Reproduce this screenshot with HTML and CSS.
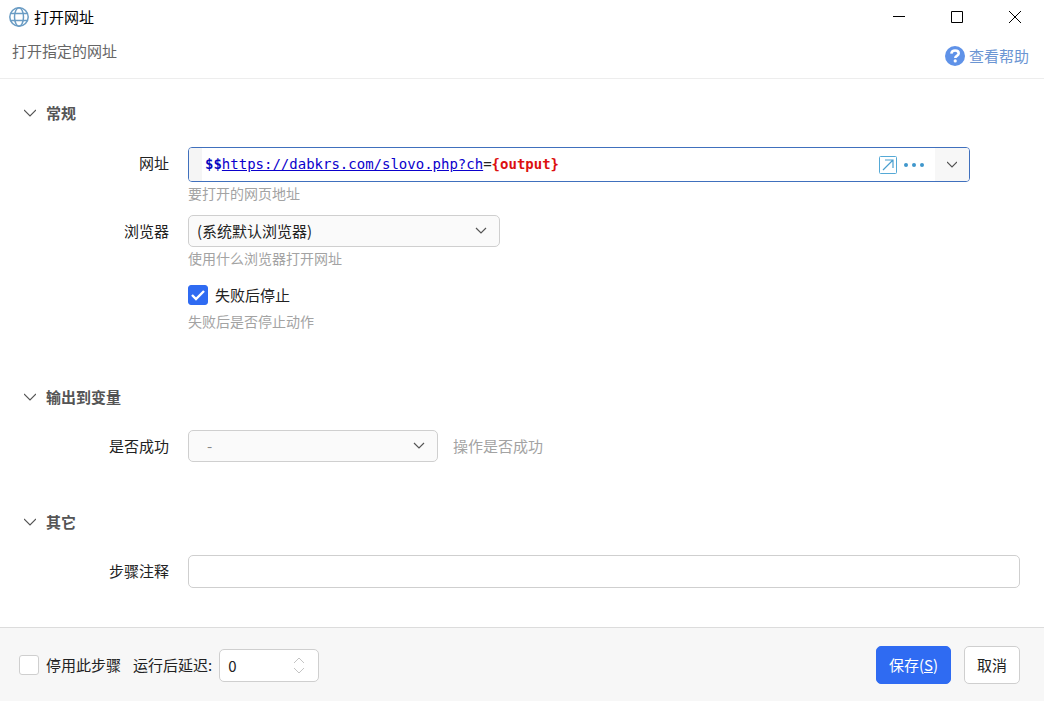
FILE: index.html
```html
<!DOCTYPE html>
<html lang="zh-CN">
<head>
<meta charset="utf-8">
<meta name="viewport" content="width=device-width, initial-scale=1">
<title>打开网址</title>
<link rel="stylesheet" href="styles.css">
</head>
<body>
<header class="titlebar">
  <svg class="globe" width="20" height="20" viewBox="0 0 20 20" aria-hidden="true"><circle cx="10" cy="10" r="9.200"/><ellipse cx="10" cy="10" rx="4.500" ry="9.200"/><path d="M2 6.500h16M2 13.500h16"/></svg>
  <h1 class="title">打开网址</h1>
  <div class="window-buttons">
    <button class="window-button" type="button" aria-label="最小化"><svg width="14" height="14" viewBox="0 0 14 14"><path d="M1 6.500h12"/></svg></button>
    <button class="window-button" type="button" aria-label="最大化"><svg width="14" height="14" viewBox="0 0 14 14"><path d="M1.500 1.500h11v11h-11z"/></svg></button>
    <button class="window-button" type="button" aria-label="关闭"><svg width="14" height="14" viewBox="0 0 14 14"><path d="M1 1l12 12M13 1L1 13"/></svg></button>
  </div>
</header>
<div class="intro">
  <p class="intro-text">打开指定的网址</p>
  <a class="help" href="#help"><svg width="20" height="20" viewBox="0 0 20 20" aria-hidden="true"><circle cx="10" cy="10" r="10" fill="#5f92e8"/><path d="M6.300 7.600C6.600 5.400 8.200 4.500 10.100 4.500c2.100 0 3.600 1.100 3.600 2.900 0 2.400-3.400 2.400-3.400 4.500" fill="none" stroke="#fff" stroke-width="2.600"/><circle cx="10.200" cy="14.900" r="1.600" fill="#fff"/></svg><span>查看帮助</span></a>
</div>
<main class="content">
  <section class="section section-general">
    <h2 class="section-title"><button class="toggle" type="button" aria-expanded="true"><svg class="chevron" width="12" height="8" viewBox="0 0 12 8"><path d="M0 1l6 6 6-6"/></svg>常规</button></h2>
    <div class="field">
      <span class="label" id="url-label">网址</span>
      <div class="control">
        <div class="url-box">
          <div class="url-text" contenteditable="true" role="textbox" aria-labelledby="url-label" spellcheck="false"><b class="prefix">$$</b><a href="#url">https://dabkrs.com/slovo.php?ch</a>=<b class="variable">{output}</b></div>
          <div class="url-actions">
            <button type="button" aria-label="展开编辑"><svg width="18" height="18" viewBox="0 0 18 18"><rect x=".500" y=".500" width="17" height="17" rx="1" fill="none" stroke="#55a9d6"/><path d="M4 14L14 4M6 4h8v8" fill="none" stroke="#4a9fcf" stroke-width="1.200"/></svg></button>
            <button type="button" aria-label="更多"><svg width="20" height="4" viewBox="0 0 20 4" fill="#3f97cc"><circle cx="2" cy="2" r="2"/><circle cx="10" cy="2" r="2"/><circle cx="18" cy="2" r="2"/></svg></button>
          </div>
          <button class="url-drop" type="button" aria-label="选择"><svg class="chevron" width="10" height="7" viewBox="0 0 10 7"><path d="M0 1l5 5 5-5"/></svg></button>
        </div>
        <p class="hint">要打开的网页地址</p>
      </div>
    </div>
    <div class="field">
      <label class="label" for="browser">浏览器</label>
      <div class="control">
        <div class="select select-browser"><select id="browser"><option>(系统默认浏览器)</option></select><svg class="chevron" width="12" height="8" viewBox="0 0 12 8"><path d="M1 1l5 5 5-5"/></svg></div>
        <p class="hint">使用什么浏览器打开网址</p>
      </div>
    </div>
    <div class="field">
      <div class="control">
        <label class="check"><input type="checkbox" checked>失败后停止</label>
        <p class="hint">失败后是否停止动作</p>
      </div>
    </div>
  </section>
  <section class="section">
    <h2 class="section-title"><button class="toggle" type="button" aria-expanded="true"><svg class="chevron" width="12" height="8" viewBox="0 0 12 8"><path d="M0 1l6 6 6-6"/></svg>输出到变量</button></h2>
    <div class="field">
      <label class="label" for="success">是否成功</label>
      <div class="control control-inline">
        <div class="select select-variable"><select id="success"><option>-</option></select><svg class="chevron" width="12" height="8" viewBox="0 0 12 8"><path d="M1 1l5 5 5-5"/></svg></div>
        <span class="note">操作是否成功</span>
      </div>
    </div>
  </section>
  <section class="section">
    <h2 class="section-title"><button class="toggle" type="button" aria-expanded="true"><svg class="chevron" width="12" height="8" viewBox="0 0 12 8"><path d="M0 1l6 6 6-6"/></svg>其它</button></h2>
    <div class="field">
      <label class="label" for="comment">步骤注释</label>
      <div class="control"><input class="text" id="comment" type="text"></div>
    </div>
  </section>
</main>
<footer class="footer">
  <label class="check"><input type="checkbox">停用此步骤</label>
  <label class="delay-label" for="delay">运行后延迟:</label>
  <div class="spinner"><input id="delay" type="number" value="0"><svg width="12" height="18" viewBox="0 0 12 18" aria-hidden="true"><path d="M1 7l5-5 5 5M1 12l5 5 5-5"/></svg></div>
  <div class="actions">
    <button class="button button-primary" type="submit">保存(<u>S</u>)</button>
    <button class="button" type="button">取消</button>
  </div>
</footer>
</body>
</html>
```
FILE: styles.css
```css
*, *::before, *::after { box-sizing: border-box; }
body {
  margin: 0;
  min-height: 100vh;
  display: flex;
  flex-direction: column;
  background: #fff;
  color: #222;
  font: 15px/24px "Noto Sans CJK SC", sans-serif;
}
h1, h2, p { margin: 0; }
button, input, select { font: inherit; color: inherit; }
button { padding: 0; border: 0; background: none; }
svg { display: block; flex: none; }

.titlebar { display: flex; align-items: center; height: 34px; padding-left: 9px; gap: 5px; }
.globe { fill: none; stroke: #6a9cc4; stroke-width: 1.5; }
.title { font-size: 15px; font-weight: 400; color: #000; }
.window-buttons { display: flex; margin-left: auto; }
.window-button { display: grid; place-items: center; width: 58px; height: 34px; }
.window-button path { fill: none; stroke: #000; }

.intro {
  display: flex;
  justify-content: space-between;
  align-items: flex-start;
  padding: 5px 15px 10px 12px;
  border-bottom: 1px solid #ededed;
}
.intro-text { color: #666; }
.help { display: flex; align-items: center; gap: 4px; padding-top: 5px; color: #6b95d3; text-decoration: none; }

.content { flex: 1; padding: 22px 24px 38px 0; }
.section + .section { margin-top: 48px; }
.section-general { padding-bottom: 4px; }
.section-title { margin-bottom: 22px; font-size: 15px; padding-left: 24px; }
.section + .section .section-title { margin-bottom: 21px; }
.toggle { display: flex; align-items: center; gap: 10px; font-weight: 700; color: #555; }
.chevron { fill: none; stroke: #555; stroke-width: 1.2; }

.field { display: grid; grid-template-columns: 169px minmax(0, 1fr); column-gap: 19px; }
.field + .field { margin-top: 10px; }
.label { grid-column: 1; text-align: right; line-height: 32px; }
.control { grid-column: 2; }
.control-inline { display: flex; align-items: center; gap: 15px; }
.hint { font-size: 14px; line-height: 23px; color: #a3a3a3; }
.note { color: #a3a3a3; }

.url-box {
  display: flex;
  align-items: center;
  height: 35px;
  margin-right: 50px;
  border: 1px solid #4070bd;
  border-radius: 4px;
  overflow: hidden;
}
.url-text {
  flex: 1;
  min-width: 0;
  padding-left: 3px;
  border-left: 13px solid #f5f5f5;
  font: 14px/33px "DejaVu Sans Mono", monospace;
  white-space: nowrap;
  overflow: hidden;
}
.url-text a { color: #0b00cc; }
.prefix { color: #0606c0; }
.variable { color: #dc1010; }
.url-actions { display: flex; align-items: center; gap: 7px; margin-right: 11px; }
.url-drop { display: grid; place-items: center; width: 34px; height: 33px; background: #f7f7f7; }

.select { display: grid; align-items: center; height: 32px; }
.select select {
  grid-area: 1 / 1;
  appearance: none;
  width: 100%;
  height: 32px;
  padding: 0 36px 0 8px;
  border: 1px solid #cfcfcf;
  border-radius: 5px;
  background: #fafafa;
}
.select .chevron { grid-area: 1 / 1; justify-self: end; margin-right: 13px; pointer-events: none; }
.select-browser { width: 312px; }
.select-variable { width: 250px; }
.select-variable select { padding-left: 18px; color: #888; }

.check { display: flex; align-items: center; gap: 7px; height: 30px; }
.check input {
  appearance: none;
  width: 20px;
  height: 20px;
  margin: 0;
  border: 1px solid #cfcfcf;
  border-radius: 3px;
  background: #fff;
}
.check input:checked {
  border-color: #2f6bf2;
  background: #2f6bf2 url("data:image/svg+xml,%3Csvg xmlns='http://www.w3.org/2000/svg' viewBox='0 0 18 18'%3E%3Cpath d='M3 9l4 4 8-8' fill='none' stroke='white' stroke-width='2.4'/%3E%3C/svg%3E") center / 18px no-repeat;
}

.text {
  display: block;
  width: 100%;
  height: 33px;
  padding: 0 8px;
  border: 1px solid #cfcfcf;
  border-radius: 5px;
  background: #fff;
}

.footer {
  display: flex;
  align-items: center;
  padding: 18px 24px 17px 19px;
  border-top: 1px solid #dcdcdc;
  background: #f7f7f7;
}
.delay-label { margin: 0 7px 0 12px; }
.spinner { display: grid; align-items: center; width: 100px; }
.spinner input {
  grid-area: 1 / 1;
  appearance: textfield;
  width: 100%;
  height: 33px;
  padding: 0 32px 0 8px;
  border: 1px solid #cfcfcf;
  border-radius: 5px;
  background: #fff;
}
.spinner input::-webkit-inner-spin-button { appearance: none; }
.spinner svg { grid-area: 1 / 1; justify-self: end; margin-right: 14px; fill: none; stroke: #c4c4c4; }
.actions { display: flex; gap: 13px; margin-left: auto; }
.button { height: 38px; padding: 0 12px; border: 1px solid #cfcfcf; border-radius: 5px; background: #fff; }
.button-primary { border-color: #2f6bf2; background: #2f6bf2; color: #fff; }
```
